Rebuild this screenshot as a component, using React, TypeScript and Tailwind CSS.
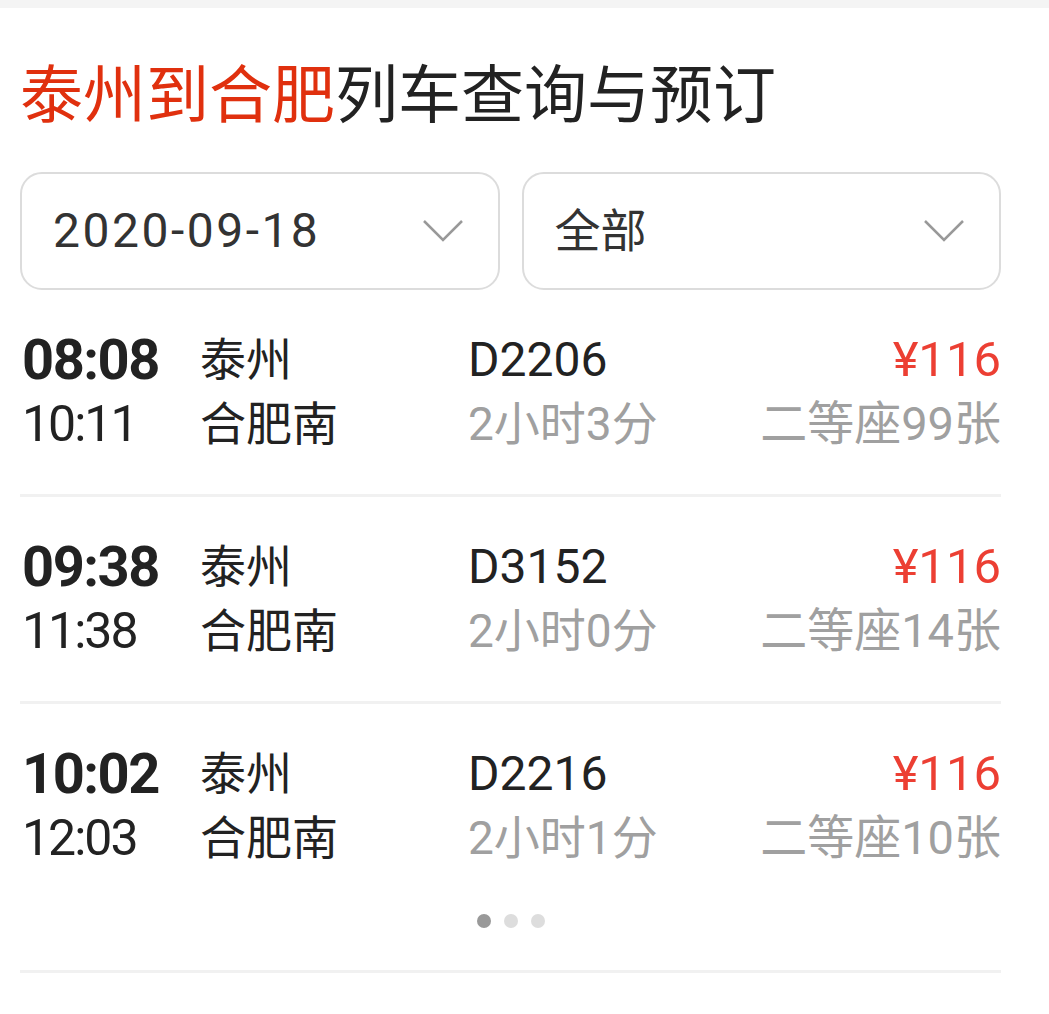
import React from "react";

const trains = [
  { dep: "08:08", arr: "10:11", from: "泰州", to: "合肥南", no: "D2206", dur: "2小时3分", price: "¥116", seat: "二等座99张" },
  { dep: "09:38", arr: "11:38", from: "泰州", to: "合肥南", no: "D3152", dur: "2小时0分", price: "¥116", seat: "二等座14张" },
  { dep: "10:02", arr: "12:03", from: "泰州", to: "合肥南", no: "D2216", dur: "2小时1分", price: "¥116", seat: "二等座10张" },
];

const font = { fontFamily: 'Roboto, "Noto Sans CJK SC", sans-serif' };

function Chevron() {
  return (
    <svg width="40" height="22" viewBox="0 0 40 22" fill="none">
      <path d="M1 1 L20 20 L39 1" stroke="#999" strokeWidth="2.5" />
    </svg>
  );
}

function Select({ label, wide }: { label: string; wide?: boolean }) {
  return (
    <div className="flex-1 h-[118px] flex items-center justify-between pl-[31px] pr-[35px] rounded-[22px] border-2 border-[#dcdcdc] bg-white">
      <span className={wide ? "text-[48px] tracking-[2.5px] text-[#333]" : "text-[46px] text-[#333]"}>{label}</span>
      <Chevron />
    </div>
  );
}

export default function App() {
  return (
    <div className="w-[1049px] min-h-[1014px] bg-white" style={font}>
      <div className="h-[8px] bg-[#f4f4f4]" />
      <div className="pl-[20px] pr-[48px]">
        {/* Title */}
        <h1 className="mt-[48px] mb-[-2px] text-[63px] leading-[80px] text-[#222] font-normal">
          <span className="text-[#e0300e]">泰州到合肥</span>列车查询与预订
        </h1>

        {/* Filters */}
        <div className="mt-[38px] flex gap-[22px]">
          <Select label="2020-09-18" wide />
          <Select label="全部" />
        </div>

        {/* Train list */}
        <div>
          {trains.map((t, i) => (
            <div
              key={t.no}
              className={
                i < trains.length - 1
                  ? "flex pt-[38px] pb-[38px] border-b-[3px] border-[#f1f1f1]"
                  : "flex pt-[38px]"
              }
            >
              <div className="w-[180px] pl-[2px]">
                <div className="h-[64px] flex items-center text-[56px] font-bold tracking-[-1.5px] text-[#222]">{t.dep}</div>
                <div className="h-[64px] flex items-center text-[50px] tracking-[-2px] text-[#222]">{t.arr}</div>
              </div>
              <div className="w-[268px]">
                <div className="h-[64px] flex items-center text-[46px] text-[#222]">{t.from}</div>
                <div className="h-[64px] flex items-center text-[46px] text-[#222]">{t.to}</div>
              </div>
              <div className="flex-1">
                <div className="h-[64px] flex items-center text-[48px] text-[#222]">{t.no}</div>
                <div className="h-[64px] flex items-center text-[46px] text-[#a0a0a0]">{t.dur}</div>
              </div>
              <div className="flex flex-col items-end">
                <div className="h-[64px] flex items-center text-[49px] text-[#ec3f33]">{t.price}</div>
                <div className="h-[64px] flex items-center text-[47px] text-[#a0a0a0]">{t.seat}</div>
              </div>
            </div>
          ))}
        </div>

        {/* Pager dots */}
        <div className="mt-[44px] flex justify-center gap-[13px]">
          <span className="w-[14px] h-[14px] rounded-full bg-[#999]" />
          <span className="w-[14px] h-[14px] rounded-full bg-[#ddd]" />
          <span className="w-[14px] h-[14px] rounded-full bg-[#ddd]" />
        </div>
        <div className="mt-[42px] border-b-[3px] border-[#f1f1f1]" />
      </div>
    </div>
  );
}
